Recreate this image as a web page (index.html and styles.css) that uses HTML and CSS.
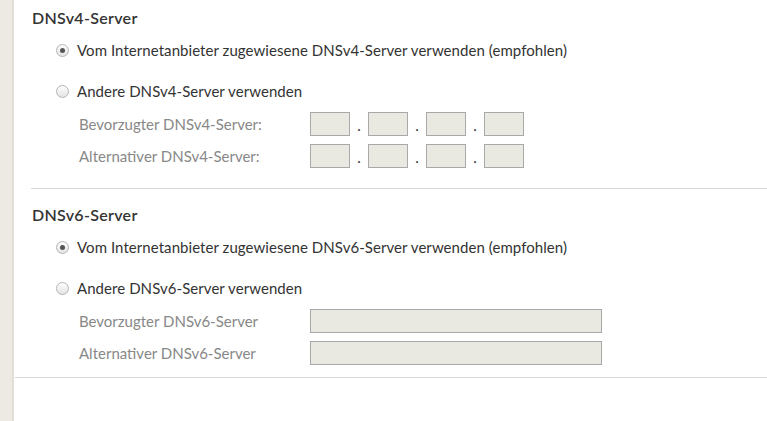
FILE: index.html
```html
<!DOCTYPE html>
<html lang="de">
<head>
  <meta charset="UTF-8" />
  <meta name="viewport" content="width=device-width, initial-scale=1.0"/>
  <title>DNS-Server</title>
  <link rel="stylesheet" href="styles.css">
</head>

<body>

  <div class="side-strip"></div>

  <main class="content">

    <!-- DNSv4 -->
    <section class="dns-group">
      <h3 class="group-title">DNSv4-Server</h3>

      <label class="option">
        <input type="radio" name="dns4" checked>
        <span class="radio-mark"></span>
        Vom Internetanbieter zugewiesene DNSv4-Server verwenden (empfohlen)
      </label>
      <label class="option option-second">
        <input type="radio" name="dns4">
        <span class="radio-mark"></span>
        Andere DNSv4-Server verwenden
      </label>

      <div class="field-row first-field">
        <span class="field-label">Bevorzugter DNSv4-Server:</span>
        <div class="ip-fields">
          <input class="ip-box" type="text" disabled>
          <span class="ip-dot">.</span>
          <input class="ip-box" type="text" disabled>
          <span class="ip-dot">.</span>
          <input class="ip-box" type="text" disabled>
          <span class="ip-dot">.</span>
          <input class="ip-box" type="text" disabled>
        </div>
      </div>
      <div class="field-row">
        <span class="field-label">Alternativer DNSv4-Server:</span>
        <div class="ip-fields">
          <input class="ip-box" type="text" disabled>
          <span class="ip-dot">.</span>
          <input class="ip-box" type="text" disabled>
          <span class="ip-dot">.</span>
          <input class="ip-box" type="text" disabled>
          <span class="ip-dot">.</span>
          <input class="ip-box" type="text" disabled>
        </div>
      </div>
    </section>

    <hr class="group-divider">

    <!-- DNSv6 -->
    <section class="dns-group dns-group-v6">
      <h3 class="group-title">DNSv6-Server</h3>

      <label class="option">
        <input type="radio" name="dns6" checked>
        <span class="radio-mark"></span>
        Vom Internetanbieter zugewiesene DNSv6-Server verwenden (empfohlen)
      </label>
      <label class="option option-second">
        <input type="radio" name="dns6">
        <span class="radio-mark"></span>
        Andere DNSv6-Server verwenden
      </label>

      <div class="field-row first-field">
        <span class="field-label">Bevorzugter DNSv6-Server</span>
        <input class="ip6-box" type="text" disabled>
      </div>
      <div class="field-row">
        <span class="field-label">Alternativer DNSv6-Server</span>
        <input class="ip6-box" type="text" disabled>
      </div>
    </section>

    <hr class="page-divider">

  </main>

</body>
</html>
```

FILE: styles.css
```css
body {
  margin: 0;
  padding: 0;
  display: flex;
  min-height: 421px;
  background-color: #fff;
  font-family: Lato, 'Noto Sans', sans-serif;
  font-size: 15px;
  color: #333;
}

.side-strip {
  width: 12px;
  flex-shrink: 0;
  background-color: #edeae3;
  border-right: 2px solid #e2dfd7;
}

.content {
  flex: 1;
  padding-left: 1px;
}

.dns-group {
  padding-left: 17px;
}

.group-title {
  margin: 6px 0 0;
  font-size: 16px;
  font-weight: 600;
  letter-spacing: 0.3px;
  line-height: 24px;
  color: #333;
}

.option {
  display: flex;
  align-items: center;
  height: 20px;
  margin-top: 10px;
  padding-left: 24px;
  letter-spacing: 0.06px;
  cursor: pointer;
}

.option-second {
  margin-top: 21px;
}

.option input {
  display: none;
}

.radio-mark {
  position: relative;
  width: 11px;
  height: 11px;
  margin-right: 8px;
  border: 1px solid #b4b4b4;
  border-radius: 50%;
  background: linear-gradient(#fdfdfd, #e4e4e4);
}

.option input:checked + .radio-mark::after {
  content: "";
  position: absolute;
  top: 3px;
  left: 3px;
  width: 5px;
  height: 5px;
  border-radius: 50%;
  background-color: #555;
}

.field-row {
  display: flex;
  align-items: center;
  height: 24px;
  margin-top: 8px;
  padding-left: 47px;
}

.first-field {
  margin-top: 11px;
}

.field-label {
  width: 231px;
  color: #888;
}

.ip-fields {
  display: flex;
  align-items: center;
}

.ip-box,
.ip6-box {
  box-sizing: border-box;
  height: 24px;
  margin: 0;
  padding: 0 4px;
  border: 1px solid #a9a9a9;
  border-radius: 0;
  background-color: #e9e8e1;
}

.ip-box {
  width: 40px;
}

.ip6-box {
  width: 292px;
}

.ip-dot {
  width: 18px;
  text-align: center;
  color: #333;
  position: relative;
  top: 1px;
}

.group-divider {
  margin: 20px 0 0 16px;
  border: 0;
  border-top: 1px solid #d8d8d8;
}

.dns-group-v6 .group-title {
  margin-top: 14px;
}

.page-divider {
  margin: 12px 0 0;
  border: 0;
  border-top: 1px solid #d8d8d8;
}
```
